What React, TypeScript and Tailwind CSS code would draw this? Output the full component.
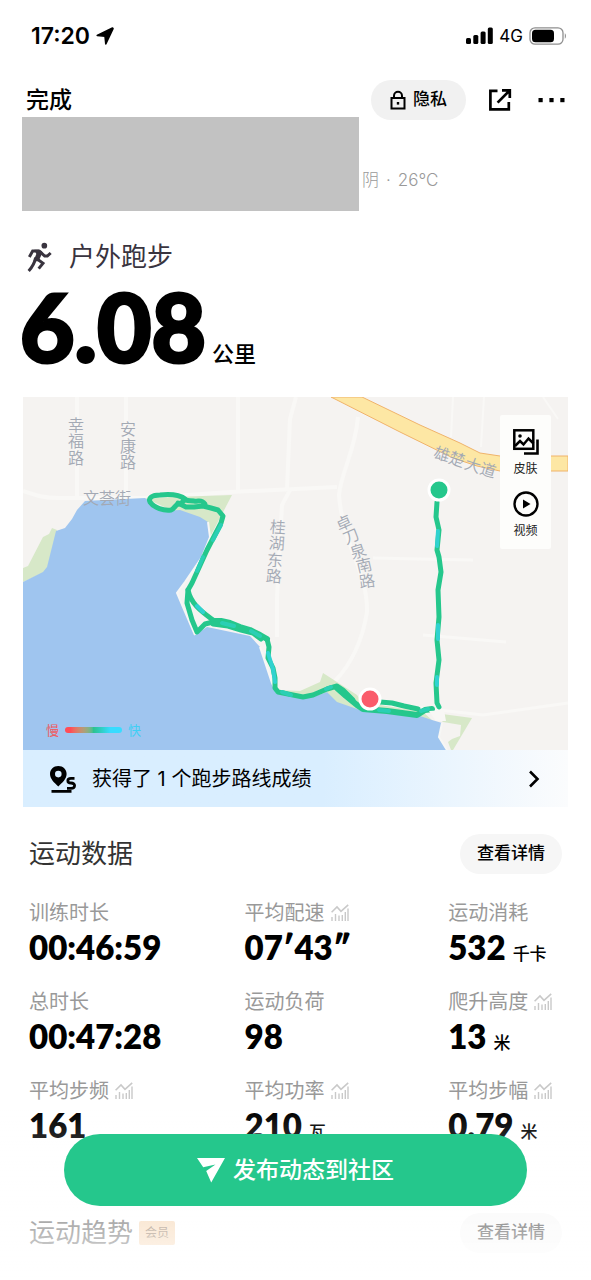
import type { ReactNode } from "react";
import clsx from "clsx";

type Stat = {
  label: string;
  value: string;
  unit?: string;
  chart?: boolean;
};

const stats: Stat[] = [
  { label: "训练时长", value: "00:46:59" },
  { label: "平均配速", value: "07′43″", chart: true },
  { label: "运动消耗", value: "532", unit: "千卡" },
  { label: "总时长", value: "00:47:28" },
  { label: "运动负荷", value: "98" },
  { label: "爬升高度", value: "13", unit: "米", chart: true },
  { label: "平均步频", value: "161", chart: true },
  { label: "平均功率", value: "210", unit: "瓦", chart: true },
  { label: "平均步幅", value: "0.79", unit: "米", chart: true },
];

function StatusBar() {
  return (
    <div className="flex h-[72px] items-center justify-between pr-[24px] pl-[31px]">
      <div className="flex items-center gap-1.5">
        <span className="text-[23px] leading-7 font-semibold">17:20</span>
        <svg width="18" height="18" viewBox="0 0 18 18" aria-hidden="true">
          <path d="M16.500 1 1.200 8.500 9 9.200 9.800 17 17 1.600Z" stroke="#000" strokeWidth="1.600" strokeLinejoin="round" />
        </svg>
      </div>
      <div className="flex items-center gap-[6px]">
        <svg width="27" height="18" viewBox="0 0 27 18" aria-hidden="true">
          <rect x="0" y="11" width="5" height="6" rx="1.5" />
          <rect x="7.300" y="8" width="5" height="9" rx="1.5" />
          <rect x="14.600" y="4.500" width="5" height="12.500" rx="1.5" />
          <rect x="21.800" y="0.500" width="5" height="16.500" rx="1.5" />
        </svg>
        <span className="text-[17px] leading-6">4G</span>
        <svg width="38" height="18" viewBox="0 0 38 18" aria-hidden="true">
          <rect x="1" y="0.800" width="33" height="16.400" rx="5" fill="none" stroke="#8f8f8f" strokeWidth="1.300" />
          <rect x="3" y="2.800" width="22" height="12.400" rx="3.500" />
          <path d="M35.800 6.300c1.500.6 1.500 4.800 0 5.400Z" fill="#8f8f8f" />
        </svg>
      </div>
    </div>
  );
}

function TopNav() {
  return (
    <header className="-mb-[11px] flex h-14 items-center justify-between px-[26px]">
      <button type="button" className="text-[23px] leading-8 font-medium">
        完成
      </button>
      <div className="flex items-center">
        <button
          type="button"
          className="flex h-10 items-center gap-[7px] rounded-full bg-[#f1f1f1] px-[19px] text-[17px] font-medium"
        >
          <svg width="16" height="20" viewBox="0 0 16 20" fill="none" stroke="#000" strokeWidth="2" aria-hidden="true">
            <rect x="1.500" y="8" width="13" height="10.500" />
            <path d="M4 8V5.800a4 4 0 0 1 8 0V8" />
            <rect x="6.800" y="12" width="2.400" height="2.600" fill="#000" stroke="none" />
          </svg>
          隐私
        </button>
        <button type="button" aria-label="分享" className="ml-[22px]">
          <svg width="24" height="24" viewBox="0 0 24 24" fill="none" stroke="#000" strokeWidth="2.700" aria-hidden="true">
            <path d="M9.500 2.800H2.400v18.600h18.400v-7.400" />
            <path d="M14 2.400h7.800V10M21.400 2.800 9.600 14.600" />
          </svg>
        </button>
        <button type="button" aria-label="更多" className="ml-[26px] py-2">
          <svg width="27" height="6" viewBox="0 0 27 6" aria-hidden="true">
            <rect x="0.500" y="1" width="4.200" height="4.200" />
            <rect x="11.400" y="1" width="4.200" height="4.200" />
            <rect x="22.300" y="1" width="4.200" height="4.200" />
          </svg>
        </button>
      </div>
    </header>
  );
}

function RunnerIcon() {
  return (
    <svg width="26" height="31" viewBox="84 59 78 93" fill="none" stroke="#39343f" strokeWidth="9" aria-hidden="true">
      <circle cx="136" cy="70" r="8.500" fill="#39343f" stroke="none" />
      <path d="M91 104 101 86h20" />
      <path d="M106 82h17l8 8-9 19 3 8-22 0 9-22z" fill="#39343f" stroke="none" />
      <path d="m122 87 15 14h8l10-9" />
      <path d="M110 106c-3 15-7 25-21 40" />
      <path d="m113 109 19 14-13 16" />
    </svg>
  );
}

function ChartIcon() {
  return (
    <svg width="18" height="18" viewBox="0 0 18 18" fill="none" stroke="#c9c9c9" strokeWidth="1.600" aria-hidden="true">
      <path d="M.6 8.300 6 3l4 4.300L17.200.8" />
      <path d="M1 13v4M4.500 10v7M8 11.500V17M11.300 11v6M14.300 8v9M17 4.500V17" strokeWidth="1.400" />
    </svg>
  );
}

const roadLabels: { char: string; x: number; y: number; rotate: number }[] = [
  { char: "幸", x: 53, y: 28, rotate: 0 },
  { char: "福", x: 53, y: 44, rotate: 0 },
  { char: "路", x: 53, y: 61, rotate: 0 },
  { char: "安", x: 105, y: 32, rotate: 0 },
  { char: "康", x: 105, y: 49, rotate: 0 },
  { char: "路", x: 105, y: 65, rotate: 0 },
  { char: "文", x: 68, y: 101, rotate: 0 },
  { char: "荟", x: 84, y: 101, rotate: 0 },
  { char: "街", x: 100, y: 101, rotate: 0 },
  { char: "桂", x: 255, y: 130, rotate: 4 },
  { char: "湖", x: 254, y: 146, rotate: 4 },
  { char: "东", x: 252, y: 163, rotate: 4 },
  { char: "路", x: 251, y: 179, rotate: 4 },
  { char: "卓", x: 321, y: 126, rotate: -24 },
  { char: "刀", x: 328, y: 139, rotate: -24 },
  { char: "泉", x: 335, y: 154, rotate: -18 },
  { char: "南", x: 341, y: 168, rotate: -13 },
  { char: "路", x: 344, y: 184, rotate: -8 },
  { char: "雄", x: 419, y: 57, rotate: 16 },
  { char: "楚", x: 434, y: 62, rotate: 18 },
  { char: "大", x: 450, y: 68, rotate: 18 },
  { char: "道", x: 465, y: 73, rotate: 16 },
];

function RouteMap() {
  return (
    <svg viewBox="0 0 545 353" className="block w-full bg-[#f5f3f1]" role="img" aria-label="跑步路线地图">
      <g fill="none" stroke="#f9f8f6" strokeWidth="4">
        <path d="M0 94C12 98 20 101 36 101L122 101 207 95 314 90" />
        <path d="M54 0V100M103 0V101M215 0V95" />
        <path d="M273 0 267 22 264 92M267 93 259 108 254 200 254 240" />
        <path d="M335 20C332 55 318 75 316 98 320 150 345 175 344 215 340 240 330 265 312 284" />
        <path d="M350 161 396 162 450 163M400 238 483 245M345 305 460 318 545 306" strokeWidth="3" />
        <path d="M430 0 428 40M461 0 458 50M520 0 535 22" strokeWidth="2" />
      </g>
      <path d="M308 0 377 35 430 61 454 69 477 74H545V59H477L457 56 437 46 397 28 339 0Z" fill="#fde7a4" stroke="#f0b36b" />
      <g fill="#d7e8c8">
        <path d="M0 171 5 169 20 140 26 137 29 131 34 133 24 172 20 176 0 185Z" />
        <path d="M122 101 209 98 187 140 180 124 150 114Z" />
        <path d="M255 293 277 294 297 285 300 276 314 285 334 298 339 305 400 315 410 324 337 316 280 303Z" />
        <path d="M419 317 449 321 430 353 421 353Z" />
      </g>
      <path d="M414 324 438 328 437 339 429 342 425 345 428 353H416Z" fill="#f5f3f1" />
      <path
        d="M0 185 20 175 24 170 33 134 42 131 49 122 54 113 62 104 122 101 129 106 140 114 157 113 177 120 185 125 187 140 179 160 162 185 154 196 160 210 172 238 184 230 227 239 237 250 249 286 254 296 277 301 290 300 304 295 314 305 337 313 397 319 409 323 419 326 416 340 424 353H0Z"
        fill="#9fc5ef"
      />
      <path
        d="M185 125 187 140 179 160 162 185 154 196 160 210 172 238M237 250 249 286 254 296M419 326 416 340 424 353"
        fill="none"
        stroke="#f7f7f5"
        strokeWidth="2"
      />
      <g fill="#a3a9b4" fontSize="16" textAnchor="middle" fontWeight="350">
        {roadLabels.map((label) => (
          <text
            key={`${label.char}-${label.x}-${label.y}`}
            x={label.x}
            y={label.y + 6}
            transform={`rotate(${label.rotate} ${label.x} ${label.y})`}
          >
            {label.char}
          </text>
        ))}
      </g>

      <g fill="none" stroke="#25c78c" strokeWidth="5" strokeLinecap="round" strokeLinejoin="round">
        <path d="M162 102C157 98 147 97 137 98 129 98 125 101 127 105 131 111 141 114 148 113 152 112 152 107 156 107 159 106 161 104 162 102Z" />
        <path d="M160 101C163 105 167 103 171 104 176 105 178 102 182 107" />
        <path d="M155 106 163 110 171 110 180 109 188 111 195 113 200 119 198 126 184 153 169 186 165 193 164 206 169 223 174 235 182 227 190 225" />
        <path d="M165 193C168 207 178 214 190 223" />
        <path d="M190 224 198 224 207 226 217 230 227 233 237 238 244 242" strokeWidth="6" />
        <path d="M190 227 205 229 218 233 230 236 238 242" />
        <path d="M244 242 246 250 245 261 250 271 252 281 252 291 255 295 265 297 280 300 290 298 304 292 314 289 320 293 330 303" />
        <path d="M314 291 323 299 334 308 340 312 364 314 394 318 402 313 409 312" strokeWidth="6" />
        <path d="M357 305 369 306 381 309 395 312" />
        <path d="M414 105 413 120 416 133 414 153 416 160 418 175 415 193 416 220 414 243 416 263 413 286 414 306 416 310" />
      </g>
      <g fill="none" stroke="#2bcfb4" strokeWidth="4" strokeLinecap="round" strokeLinejoin="round">
        <path d="M198 128 190 143M180 160 174 174M199 226 211 229M228 234 237 239" />
        <path d="M303 292 308 290M356 313 366 314M398 314 405 312M259 295 268 298" />
        <path d="M415 134 414 149M415 228 415 242M414 280 414 288" stroke="#30d2d0" />
        <path d="M174 209 180 215M245 256 250 272 252 285" stroke="#30d2d0" />
      </g>
      <path d="M406 314 421 313 423 324 413 324Z" fill="#f8f7f5" />
      <circle cx="416" cy="93" r="10" fill="#25c78c" stroke="#fff" strokeWidth="3" />
      <circle cx="347" cy="302" r="10" fill="#fa5c6b" stroke="#fff" strokeWidth="3" />
    </svg>
  );
}

function MapTool({ label, children }: { label: string; children: ReactNode }) {
  return (
    <button type="button" className="flex flex-col items-center gap-1 text-[12px] leading-5 text-[#222]">
      {children}
      {label}
    </button>
  );
}

function MapCard() {
  return (
    <section className="mx-[23px] mt-[19px]">
      <div className="relative">
        <RouteMap />
        <div className="absolute top-[18px] right-[17px] flex h-[134px] w-[51px] flex-col items-center justify-center gap-3 rounded-xs bg-[#fdfdfb] pt-[6px]">
          <MapTool label="皮肤">
            <svg width="26" height="26" viewBox="0 0 26 26" fill="none" stroke="#000" strokeWidth="2.500" aria-hidden="true">
              <rect x="1.300" y="1.300" width="19" height="18.500" />
              <path d="m2 17 5-5 3.500 3.500 5-6 5 5" />
              <path d="M24.500 10.500V24.500H11" strokeWidth="2.600" />
              <circle cx="7" cy="7" r="1.800" fill="#000" stroke="none" />
            </svg>
          </MapTool>
          <MapTool label="视频">
            <svg width="26" height="26" viewBox="0 0 26 26" fill="none" stroke="#000" strokeWidth="2.400" aria-hidden="true">
              <circle cx="13" cy="13" r="11.500" />
              <path d="M10 8.500v9l7.500-4.500Z" fill="#000" stroke="none" />
            </svg>
          </MapTool>
        </div>
        <div className="absolute bottom-[10px] left-[23px] flex items-center gap-[6px] text-[13px] leading-5">
          <span className="text-[#f05a5f]">慢</span>
          <span className="h-[6px] w-[57px] rounded-full bg-linear-to-r from-[#ff4d57] from-10% via-[#2cc290] via-50% to-[#38dcff] to-80%" />
          <span className="text-[#3fcff5]">快</span>
        </div>
      </div>
      <button
        type="button"
        className="flex h-[57px] w-full items-center bg-linear-to-r from-[#d9eeff] from-55% to-[#fbfcfd] px-[26px] text-left text-[20px]"
      >
        <svg width="27" height="28" viewBox="0 0 27 28" aria-hidden="true">
          <path
            d="M9.300 1C4.500 1 1 4.500 1 9c0 5 4.300 8.600 8.300 12.500C13.300 17.600 17.600 14 17.600 9c0-4.500-3.500-8-8.300-8Zm0 4.800a3.300 3.300 0 1 1 0 6.600 3.300 3.300 0 0 1 0-6.600Z"
            fillRule="evenodd"
          />
          <path
            d="M25.500 13.300h-3.500c-4.200 0-4.200 4.700 0 4.700 5 0 4.500 5.400 0 5.400h-4M2.500 26.300h20"
            fill="none"
            stroke="#000"
            strokeWidth="2.800"
          />
        </svg>
        <span className="ml-4 flex-1">获得了 1 个跑步路线成绩</span>
        <svg width="16" height="18" viewBox="0 0 16 18" fill="none" stroke="#000" strokeWidth="2.600" aria-hidden="true">
          <path d="m4 1.500 7.500 7.500L4 16.500" />
        </svg>
      </button>
    </section>
  );
}

function SectionHeader({ title, badge }: { title: string; badge?: string }) {
  return (
    <div className="flex items-center">
      <h2 className="text-[26px] leading-10 text-[#333]">{title}</h2>
      {badge && (
        <span className="ml-[6px] rounded-xs bg-[#f3c99c] px-[6px] text-[12px] leading-6 text-[#6b4a2a]">{badge}</span>
      )}
      <button type="button" className="ml-auto h-10 rounded-full bg-[#f6f6f6] px-[17px] text-[17px] font-medium">
        查看详情
      </button>
    </div>
  );
}

function StatItem({ label, value, unit, chart }: Stat) {
  return (
    <div>
      <dt className="flex items-center gap-[6px] text-[20px] leading-7 whitespace-nowrap text-[#999]">
        {label}
        {chart && <ChartIcon />}
      </dt>
      <dd className="flex items-baseline gap-[7px] whitespace-nowrap">
        <span className="font-['Lato','Noto_Sans_CJK_SC',sans-serif] text-[33px] leading-10 font-extrabold">{value}</span>
        {unit && <span className="text-[17px] leading-6 font-medium">{unit}</span>}
      </dd>
    </div>
  );
}

export default function App() {
  return (
    <main
      className={clsx(
        "relative h-screen overflow-hidden bg-white text-black",
        "font-['Inter','Noto_Sans_CJK_SC',sans-serif]",
      )}
    >
      <StatusBar />
      <TopNav />

      <div className="ml-[22px] flex h-[94px] gap-[3px]">
        <div className="w-[337px] bg-[#c2c2c2]" />
        <p className="flex gap-[7px] pt-[51px] text-[17px] leading-6 font-light text-[#999]">
          <span>阴</span>
          <span>·</span>
          <span>26°C</span>
        </p>
      </div>

      <div className="mt-[26px] ml-[27px] flex items-center gap-[16px]">
        <RunnerIcon />
        <h1 className="text-[26px] leading-10 text-[#39343f]">户外跑步</h1>
      </div>
      <p className="ml-[20px] flex items-baseline gap-[6px]">
        <span className="font-['Lato',sans-serif] text-[94px] leading-[98px] font-black [-webkit-text-stroke:3px_#000]">
          6.08
        </span>
        <span className="text-[22px] leading-8 font-medium">公里</span>
      </p>

      <div className="pt-[3px]">
        <MapCard />
      </div>

      <section className="mx-[29px] mt-[27px]">
        <SectionHeader title="运动数据" />
        <dl className="mt-[25px] grid grid-cols-[216fr_204fr_114fr] gap-y-[21px]">
          {stats.map((stat) => (
            <StatItem key={stat.label} {...stat} />
          ))}
        </dl>
      </section>

      <section className="mx-[29px] mt-[68px]">
        <SectionHeader title="运动趋势" badge="会员" />
      </section>

      <footer className="fixed inset-x-0 bottom-0 h-[170px] bg-linear-to-t from-white/90 to-white/0 px-16 pt-6">
        <button
          type="button"
          className="flex h-[72px] w-full items-center justify-center gap-2 rounded-full bg-[#25c78c] text-[23px] font-medium text-white"
        >
          <svg width="28" height="25" viewBox="0 0 28 25" fill="#fff" aria-hidden="true">
            <path d="M0 0h28L14.200 24.500 9.200 13 18.500 6.400 6.200 9.200Z" />
          </svg>
          发布动态到社区
        </button>
      </footer>
    </main>
  );
}
